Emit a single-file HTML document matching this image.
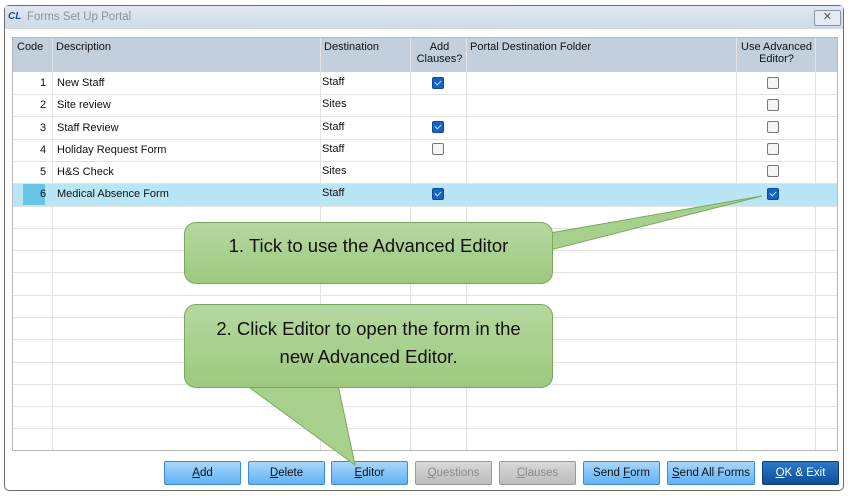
<!DOCTYPE html><html><head><style>
body{margin:0;width:850px;height:496px;background:#fff;position:relative;overflow:hidden;font-family:"Liberation Sans",sans-serif;}
.win{position:absolute;left:4px;top:5px;width:840px;height:486px;border:1px solid #6d6d6d;border-radius:5px;background:#fff;box-sizing:border-box;}
.tb{position:absolute;left:5px;top:6px;width:838px;height:23px;background:linear-gradient(#dfe8f2,#cfdae6);}
.grid{position:absolute;left:12px;top:37px;width:826px;height:414px;border:1px solid #b9b9b9;box-sizing:border-box;background:#fff;overflow:hidden}
.hdr{position:absolute;left:0;top:0;width:826px;height:34px;background:#c2cfdc;}
.vl{position:absolute;top:0;width:1px;height:414px;background:#e3e3e3}
.hl{position:absolute;left:0;width:826px;height:1px;background:#e3e3e3}
.t{position:absolute;font-size:11px;color:#111;white-space:nowrap}
.cb{position:absolute;width:10px;height:10px;border:1px solid #777;border-radius:2px;background:#f4f4f4}
.cb.on{background:#1565c0;border-color:#0d47a1}
.cb.on:after{content:"";position:absolute;left:3px;top:1px;width:3px;height:5px;border:solid #cfe3ff;border-width:0 1px 1px 0;transform:rotate(45deg)}
.btn{position:absolute;top:461px;height:24px;border:1px solid #3a8bd6;border-radius:2px;background:linear-gradient(#a9d7fb,#5fb2f4);font-size:11.5px;text-align:center;line-height:23px;color:#111;box-sizing:border-box}
.btn.dis{border-color:#999;background:linear-gradient(#d8d8d8,#bdbdbd);color:#8a8a8a}
.btn.ok{border-color:#0b3f7a;background:linear-gradient(#2d78c8,#0d4f9a);color:#fff}
.call{position:absolute;left:184px;width:369px;border:1px solid #79a95c;border-radius:12px;background:linear-gradient(#b6d8a0,#9cc97f);font-size:18.5px;color:#111;text-align:center;box-sizing:border-box}
</style></head><body>
<div class="win"></div><div class="tb"></div>
<div style="position:absolute;left:8px;top:11px;font:bold italic 10px 'Liberation Sans';color:#1a4c8c">CL</div>
<div style="position:absolute;left:27px;top:11px;font-size:11.5px;color:#8a929c">Forms Set Up Portal</div>
<div style="position:absolute;left:814px;top:10px;width:25px;height:14px;border:1px solid #8a95a2;border-radius:2px;background:#e5ebf2;font-size:11px;text-align:center;line-height:13px;color:#555">✕</div>
<div class="grid">
<div class="hdr"></div>
<div class="vl" style="left:39px"></div><div class="vl" style="left:307px"></div><div class="vl" style="left:397px"></div><div class="vl" style="left:453px"></div><div class="vl" style="left:723px"></div><div class="vl" style="left:802px"></div>
<div style="position:absolute;left:0;top:146px;width:826px;height:22px;background:#b9e6f5"></div>
<div style="position:absolute;left:10px;top:146px;width:22px;height:21px;background:#66c6e8"></div>
<div class="hl" style="top:56px"></div><div class="hl" style="top:78px"></div><div class="hl" style="top:101px"></div><div class="hl" style="top:123px"></div><div class="hl" style="top:145px"></div><div class="hl" style="top:168px"></div><div class="hl" style="top:190px"></div><div class="hl" style="top:212px"></div><div class="hl" style="top:234px"></div><div class="hl" style="top:257px"></div><div class="hl" style="top:279px"></div><div class="hl" style="top:301px"></div><div class="hl" style="top:324px"></div><div class="hl" style="top:346px"></div><div class="hl" style="top:368px"></div><div class="hl" style="top:390px"></div>
<div class="t" style="left:4px;top:3px">Code</div><div class="t" style="left:43px;top:3px">Description</div><div class="t" style="left:311px;top:3px">Destination</div>
<div class="t" style="left:399px;top:3px;width:55px;text-align:center;line-height:12px">Add<br>Clauses?</div>
<div class="t" style="left:457px;top:3px">Portal Destination Folder</div>
<div class="t" style="left:724px;top:3px;width:79px;text-align:center;line-height:12px">Use Advanced<br>Editor?</div>
</div>
<div class="t" style="left:40px;top:77px">1</div><div class="t" style="left:57px;top:77px">New Staff</div><div class="t" style="left:322px;top:76px">Staff</div>
<div class="t" style="left:40px;top:99px">2</div><div class="t" style="left:57px;top:99px">Site review</div><div class="t" style="left:322px;top:98px">Sites</div>
<div class="t" style="left:40px;top:122px">3</div><div class="t" style="left:57px;top:122px">Staff Review</div><div class="t" style="left:322px;top:121px">Staff</div>
<div class="t" style="left:40px;top:144px">4</div><div class="t" style="left:57px;top:144px">Holiday Request Form</div><div class="t" style="left:322px;top:143px">Staff</div>
<div class="t" style="left:40px;top:166px">5</div><div class="t" style="left:57px;top:166px">H&amp;S Check</div><div class="t" style="left:322px;top:165px">Sites</div>
<div class="t" style="left:40px;top:188px">6</div><div class="t" style="left:57px;top:188px">Medical Absence Form</div><div class="t" style="left:322px;top:187px">Staff</div>
<div class="cb on" style="left:432px;top:77px"></div><div class="cb on" style="left:432px;top:121px"></div><div class="cb" style="left:432px;top:143px"></div><div class="cb on" style="left:432px;top:188px"></div>
<div class="cb" style="left:767px;top:77px"></div><div class="cb" style="left:767px;top:99px"></div><div class="cb" style="left:767px;top:121px"></div><div class="cb" style="left:767px;top:143px"></div><div class="cb" style="left:767px;top:165px"></div><div class="cb on" style="left:767px;top:188px"></div>
<div class="btn" style="left:164px;width:77px"><u>A</u>dd</div>
<div class="btn" style="left:248px;width:77px"><u>D</u>elete</div>
<div class="btn" style="left:331px;width:77px"><u>E</u>ditor</div>
<div class="btn dis" style="left:415px;width:77px"><u>Q</u>uestions</div>
<div class="btn dis" style="left:499px;width:77px"><u>C</u>lauses</div>
<div class="btn" style="left:583px;width:77px">Send <u>F</u>orm</div>
<div class="btn" style="left:667px;width:88px"><u>S</u>end All Forms</div>
<div class="btn ok" style="left:762px;width:77px"><u>O</u>K &amp; Exit</div>
<svg style="position:absolute;left:0;top:0" width="850" height="496">
<polygon points="550,233 762,196 550,250" fill="#a8d08d" stroke="#79a95c"/>
<polygon points="246,385 355,465 338,385" fill="#a8d08d" stroke="#79a95c"/>
</svg>
<div class="call" style="top:222px;height:62px;line-height:46px">1. Tick to use the Advanced Editor</div>
<div class="call" style="top:304px;height:84px;padding-top:10px;line-height:28px">2. Click Editor to open the form in the<br>new Advanced Editor.</div>
</body></html>
